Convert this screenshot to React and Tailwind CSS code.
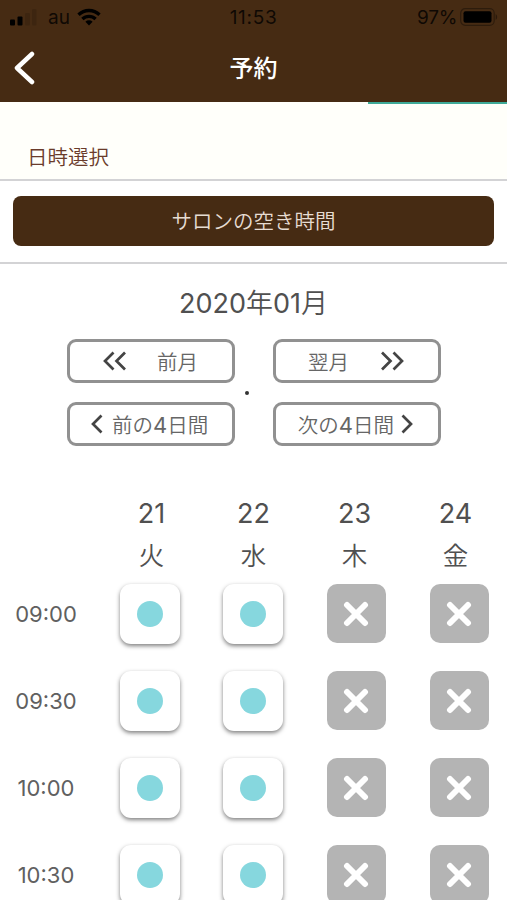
import React from 'react';

const days = [
  { date: '21', weekday: '火', shift: 'left-[2px]' },
  { date: '22', weekday: '水', shift: 'left-[1px]' },
  { date: '23', weekday: '木', shift: '-left-px' },
  { date: '24', weekday: '金', shift: '-left-[3px]' },
];

const slots = [
  { time: '09:00', open: [true, true, false, false] },
  { time: '09:30', open: [true, true, false, false] },
  { time: '10:00', open: [true, true, false, false] },
  { time: '10:30', open: [true, true, false, false] },
];

const Chevron = ({ double, right }) => (
  <svg
    width={double ? 24 : 12}
    height="20"
    viewBox={double ? '0 0 24 20' : '0 0 12 20'}
    fill="none"
    stroke="#444"
    strokeWidth="2.7"
    className={`shrink-0 ${right ? '-scale-x-100' : ''}`}
  >
    <path d="M10.5 1.5L2 10l8.5 8.5" />
    {double && <path d="M22 1.5L13.5 10l8.5 8.5" />}
  </svg>
);

const NavButton = ({ children, className }) => (
  <button
    className={`flex h-[44px] w-[168px] items-center rounded-[9px] border-3 border-[#919191] text-[20.500px] leading-none whitespace-nowrap text-[#666] ${className}`}
  >
    {children}
  </button>
);

const StatusBar = () => (
  <div className="flex h-[34px] items-center text-[19px] leading-none text-black/80">
    <div className="flex flex-1 items-center">
      <svg width="27" height="17" viewBox="0 0 27 17" fill="#000" className="ml-[10px]">
        <rect x="0" y="10.500" width="5" height="6" rx="1" />
        <rect x="7.500" y="7.500" width="5" height="9" rx="1" />
        <rect x="15" y="4" width="5" height="12.500" rx="1" opacity=".12" />
        <rect x="22" y="0" width="4.500" height="16.500" rx="1" opacity=".12" />
      </svg>
      <span className="ml-[11px]">au</span>
      <svg width="24" height="18" viewBox="0 0 24 18" className="ml-[7px]">
        <g fill="none" stroke="#000" strokeWidth="3.300">
          <path d="M1.500 6.800a15 15 0 0 1 21 0" />
          <path d="M5.400 11a9.400 9.400 0 0 1 13.200 0" />
        </g>
        <path d="M12 17.500l-3.600-3.700a5.100 5.100 0 0 1 7.200 0z" fill="#000" />
      </svg>
    </div>
    <span className="tracking-[0.7px]">11:53</span>
    <div className="flex flex-1 items-center justify-end">
      <span className="tracking-[-0.3px]">97%</span>
      <svg width="38" height="18" viewBox="0 0 38 18" className="mr-[9px] ml-[3px]">
        <rect x=".7" y=".7" width="33.500" height="16.600" rx="4.500" fill="none" stroke="#000" strokeWidth="1.200" opacity=".35" />
        <rect x="3.500" y="3.200" width="28" height="11.600" rx="2" fill="#000" />
        <path d="M35.700 6v6c2-1.500 2-4.500 0-6z" fill="#000" opacity=".4" />
      </svg>
    </div>
  </div>
);

const Slot = ({ open }) =>
  open ? (
    <button className="flex size-[60px] items-center justify-center rounded-[11px] bg-white pb-px shadow-[0_2px_4px_rgba(0,0,0,0.5)]">
      <span className="size-[26px] rounded-full bg-[#86d7de]" />
    </button>
  ) : (
    <div className="ml-px flex size-[59px] items-center justify-center rounded-[10px] bg-[#b4b4b4]">
      <svg width="26" height="26" viewBox="0 0 26 26" stroke="#fff" strokeWidth="6" strokeLinecap="round">
        <path d="M4 4l18 18M22 4L4 22" />
      </svg>
    </div>
  );

export default function App() {
  return (
    <div className="flex h-[900px] w-[507px] flex-col overflow-hidden bg-white font-['Inter','Noto_Sans_CJK_JP',sans-serif] text-[#505050]">
      <header className="h-[102px] shrink-0 bg-[#462b13]">
        <StatusBar />
        <div className="flex h-[68px] items-center">
          <button className="flex-1">
            <svg width="22" height="34" viewBox="0 0 22 34" fill="none" stroke="#fff" strokeWidth="4.500" strokeLinecap="round" strokeLinejoin="round" className="ml-[13px]">
              <path d="M19 3L4 17l15 14" />
            </svg>
          </button>
          <h1 className="pt-[2px] text-[24px] leading-none font-medium text-white">予約</h1>
          <div className="flex-1" />
        </div>
      </header>

      <div className="flex h-[79px] shrink-0 flex-col border-b-2 border-[#d3d3d5] bg-[#fffffa]">
        <div className="h-[2px] w-[139px] shrink-0 self-end bg-[#3eaa98]" />
        <h2 className="mt-[43px] pl-[27px] text-[20.500px] leading-[22px] font-[350] text-[#6a3b2a]">日時選択</h2>
      </div>

      <div className="h-[83px] shrink-0 border-b-2 border-[#d3d3d5] px-[13px] pt-[15px]">
        <button className="flex h-[50px] w-full items-center justify-center rounded-[8px] bg-[#462b13] pt-[2px] text-[20.500px] leading-none font-[350] text-[#e6dcd2]">
          サロンの空き時間
        </button>
      </div>

      <h3 className="mt-[24px] text-center text-[27px] leading-[32px]">
        2020<span className="font-[350]">年</span>01<span className="font-[350]">月</span>
      </h3>

      <div className="mt-[19px] flex shrink-0 items-center pl-[67px]">
        <div className="flex flex-col gap-[19px]">
          <NavButton className="pl-[33px]">
            <Chevron double />
            <span className="mt-[4px] ml-[30px] font-[350]">前月</span>
          </NavButton>
          <NavButton className="pl-[21px]">
            <Chevron />
            <span className="mt-[3px] ml-[9px] font-[350]">
              前の<span className="text-[22px] font-normal">4</span>日間
            </span>
          </NavButton>
        </div>
        <div className="flex w-[38px] justify-center pr-[14px]">
          <span className="size-[4px] rounded-full bg-[#333]" />
        </div>
        <div className="flex flex-col gap-[19px]">
          <NavButton className="justify-end pr-[34px]">
            <span className="mt-[4px] mr-[31px] font-[350]">翌月</span>
            <Chevron double right />
          </NavButton>
          <NavButton className="justify-end pr-[25px]">
            <span className="mt-[3px] mr-[7px] font-[350]">
              次の<span className="text-[22px] font-normal">4</span>日間
            </span>
            <Chevron right />
          </NavButton>
        </div>
      </div>

      <div className="mt-[45px] grid grid-cols-[98px_repeat(4,103px)]">
        <div />
        {days.map((day) => (
          <div key={day.date} className={`relative h-[93px] text-center ${day.shift}`}>
            <div className="h-[43px] text-[27px] leading-[45px]">{day.date}</div>
            <div className="h-[41px] text-[25.500px] leading-[43px] font-[350]">{day.weekday}</div>
          </div>
        ))}
        {slots.map((slot) => (
          <React.Fragment key={slot.time}>
            <div className="flex h-[59px] items-center justify-center pt-px pr-[6px] text-[22px] text-[#606060]">{slot.time}</div>
            {slot.open.map((open, i) => (
              <div key={i} className="flex h-[87px] justify-center">
                <Slot open={open} />
              </div>
            ))}
          </React.Fragment>
        ))}
      </div>
    </div>
  );
}
